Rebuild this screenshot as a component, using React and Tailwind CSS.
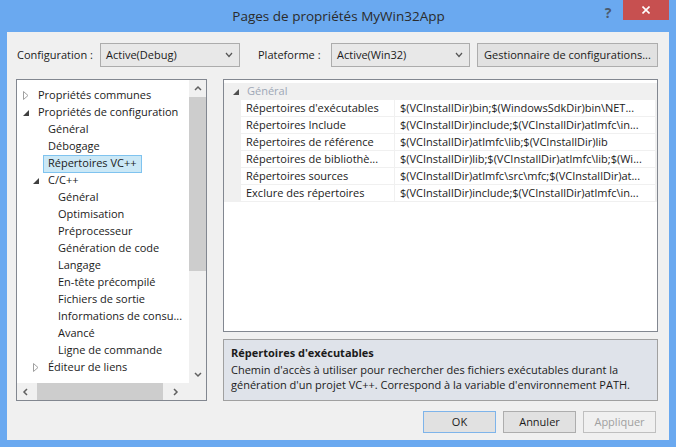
import React from 'react';

const font = "font-['Segoe_UI','Open_Sans',sans-serif]";

function Collapsed() {
  return (
    <svg width="6" height="9" viewBox="0 0 6 9" className="block">
      <path d="M0.5 0.5 L5 4.5 L0.5 8.5 Z" fill="none" stroke="#a0a0a0" strokeWidth="1" />
    </svg>
  );
}

function Expanded({ color = '#404040' }) {
  return (
    <svg width="6" height="6" viewBox="0 0 6 6" className="block">
      <path d="M6 0 L6 6 L0 6 Z" fill={color} />
    </svg>
  );
}

const tree = [
  { label: 'Propriétés communes', slot: 'w-[21px]', tri: 'closed' },
  { label: 'Propriétés de configuration', slot: 'w-[21px]', tri: 'open' },
  { label: 'Général', slot: 'w-[31px]' },
  { label: 'Débogage', slot: 'w-[31px]' },
  { label: 'Répertoires VC++', slot: 'w-[26px]', selected: true },
  { label: 'C/C++', slot: 'w-[31px]', tri: 'open' },
  { label: 'Général', slot: 'w-[41px]' },
  { label: 'Optimisation', slot: 'w-[41px]' },
  { label: 'Préprocesseur', slot: 'w-[41px]' },
  { label: 'Génération de code', slot: 'w-[41px]' },
  { label: 'Langage', slot: 'w-[41px]' },
  { label: 'En-tête précompilé', slot: 'w-[41px]' },
  { label: 'Fichiers de sortie', slot: 'w-[41px]' },
  { label: 'Informations de consu...', slot: 'w-[41px]' },
  { label: 'Avancé', slot: 'w-[41px]' },
  { label: 'Ligne de commande', slot: 'w-[41px]' },
  { label: 'Éditeur de liens', slot: 'w-[31px]', tri: 'closed' },
];

const props = [
  ['Répertoires d\'exécutables', '$(VCInstallDir)bin;$(WindowsSdkDir)bin\\NET...'],
  ['Répertoires Include', '$(VCInstallDir)include;$(VCInstallDir)atlmfc\\in...'],
  ['Répertoires de référence', '$(VCInstallDir)atlmfc\\lib;$(VCInstallDir)lib'],
  ['Répertoires de bibliothè...', '$(VCInstallDir)lib;$(VCInstallDir)atlmfc\\lib;$(Wi...'],
  ['Répertoires sources', '$(VCInstallDir)atlmfc\\src\\mfc;$(VCInstallDir)at...'],
  ['Exclure des répertoires', '$(VCInstallDir)include;$(VCInstallDir)atlmfc\\in...'],
];

function Chevron({ dir }) {
  const d = {
    up: 'M1 5 L4 2 L7 5',
    down: 'M1 2 L4 5 L7 2',
    left: 'M5 1 L2 4 L5 7',
    right: 'M2 1 L5 4 L2 7',
  }[dir];
  return (
    <svg width="8" height="8" viewBox="0 0 8 8" className="block">
      <path d={d} fill="none" stroke="#606060" strokeWidth="1.5" />
    </svg>
  );
}

function Combo({ value, width }) {
  return (
    <div className={`${width} h-[24px] flex items-center justify-between border border-[#acacac] bg-[#e8e8e8] pl-[5px] pr-[6px]`}>
      <span>{value}</span>
      <svg width="8" height="6" viewBox="0 0 8 6" className="block">
        <path d="M1 1 L4 4.5 L7 1" fill="none" stroke="#555" strokeWidth="1.2" />
      </svg>
    </div>
  );
}

export default function App() {
  return (
    <div className={`${font} w-[676px] h-[447px] bg-[#6aa9f0] flex flex-col text-[11px] text-[#1b1b1b] overflow-hidden`}>
      {/* title bar */}
      <div className="h-[32px] flex items-start">
        <div className="flex-1 h-[32px] flex items-center justify-center pl-[84px] text-[13.5px] text-[#2b2b2b]">
          Pages de propriétés MyWin32App
        </div>
        <div className="w-[30px] pt-[2px] text-[14px] font-bold text-[#4a5a6e] text-center">?</div>
        <div className="w-[46px] h-[20px] bg-[#c75050] flex items-center justify-center mr-[7px]">
          <svg width="8" height="8" viewBox="0 0 8 8" className="block">
            <path d="M0.5 0.5 L7.5 7.5 M7.5 0.5 L0.5 7.5" stroke="#fff" strokeWidth="1.6" />
          </svg>
        </div>
      </div>

      {/* client area */}
      <div className="mx-[7px] h-[408px] bg-[#f0f0f0] flex flex-col">
        <div className="mt-[11px] h-[24px] flex items-center pl-[10px] whitespace-nowrap">
          <span className="w-[83px]">Configuration :</span>
          <Combo value="Active(Debug)" width="w-[140px]" />
          <span className="ml-[18px] w-[73px]">Plateforme :</span>
          <Combo value="Active(Win32)" width="w-[139px]" />
          <div className="ml-[7px] w-[181px] h-[24px] flex items-center justify-center border border-[#adadad] bg-[#e1e1e1]">
            Gestionnaire de configurations...
          </div>
        </div>

        <div className="mt-[12px] flex pl-[9px]">
          {/* tree */}
          <div className="w-[191px] h-[322px] border border-[#828790] bg-white grid grid-cols-[172px_17px] grid-rows-[303px_17px]">
            <div className="pt-[7px] overflow-hidden">
              {tree.map((r, i) => (
                <div key={i} className="h-[17px] flex items-center whitespace-nowrap">
                  <span className={`${r.slot} shrink-0 flex justify-end pr-[9px]`}>
                    {r.tri === 'closed' && <Collapsed />}
                    {r.tri === 'open' && <Expanded />}
                  </span>
                  {r.selected ? (
                    <span className="h-[18px] flex items-center px-[4px] border border-[#7fc3ef] bg-[#cbe8f6]">{r.label}</span>
                  ) : (
                    <span>{r.label}</span>
                  )}
                </div>
              ))}
            </div>
            <div className="bg-[#f0f0f0] flex flex-col items-center">
              <div className="h-[17px] flex items-center justify-center"><Chevron dir="up" /></div>
              <div className="w-[17px] h-[174px] bg-[#cdcdcd]" />
              <div className="flex-1" />
              <div className="h-[17px] flex items-center justify-center"><Chevron dir="down" /></div>
            </div>
            <div className="bg-[#f0f0f0] flex items-center">
              <div className="w-[17px] flex justify-center"><Chevron dir="left" /></div>
              <div className="w-[126px] h-[17px] bg-[#cdcdcd] ml-[3px]" />
              <div className="flex-1 flex justify-center"><Chevron dir="right" /></div>
            </div>
            <div className="bg-[#f0f0f0]" />
          </div>

          {/* right column */}
          <div className="ml-[16px] w-[435px] flex flex-col">
            <div className="h-[253px] border border-[#828790] bg-white pt-[3px]">
              <div className="h-[17px] flex items-center bg-[#f0f0f0]">
                <span className="w-[23px] flex justify-center"><Expanded color="#505050" /></span>
                <span className="text-[#9ea7b6]">Général</span>
              </div>
              <div className="bg-[#f0f0f0] pl-[17px] flex flex-col gap-px pb-px">
                {props.map(([n, v], i) => (
                  <div key={i} className="h-[16px] flex gap-px whitespace-nowrap">
                    <div className="w-[153px] bg-white pl-[5px] flex items-center overflow-hidden">{n}</div>
                    <div className="w-[260px] bg-white pl-[5px] flex items-center overflow-hidden">{v}</div>
                  </div>
                ))}
              </div>
            </div>
            <div className="mt-[7px] h-[62px] border border-[#a0a0a0] bg-[#dfe3ea] px-[7px] pt-[5px]">
              <div className="font-bold leading-[16px]">Répertoires d'exécutables</div>
              <div className="mt-px leading-[15px]">
                Chemin d'accès à utiliser pour rechercher des fichiers exécutables durant la<br />génération d'un projet VC++. Correspond à la variable d'environnement PATH.
              </div>
            </div>
          </div>
        </div>

        <div className="mt-[10px] flex justify-end gap-[7px] pr-[13px]">
          <div className="w-[73px] h-[22px] flex items-center justify-center border border-[#7eb4ea] bg-[#e1e1e1]">OK</div>
          <div className="w-[73px] h-[22px] flex items-center justify-center border border-[#adadad] bg-[#e1e1e1]">Annuler</div>
          <div className="w-[73px] h-[22px] flex items-center justify-center border border-[#bfbfbf] bg-[#f0f0f0] text-[#a0a0a0]">Appliquer</div>
        </div>
      </div>
    </div>
  );
}
